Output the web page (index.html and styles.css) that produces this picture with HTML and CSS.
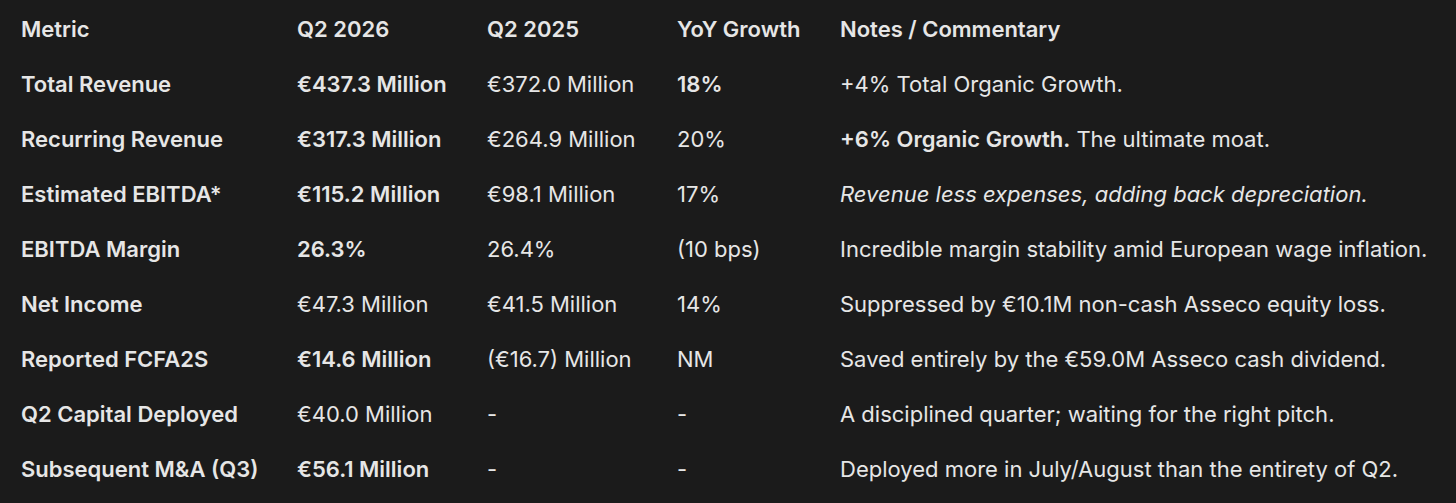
FILE: index.html
```html
<!DOCTYPE html>
<html lang="en">
<head>
<meta charset="utf-8">
<title>Q2 2026 Metrics</title>
<link rel="stylesheet" href="styles.css">
</head>
<body>
<table class="metrics">
  <colgroup>
    <col class="c1"><col class="c2"><col class="c3"><col class="c4"><col class="c5">
  </colgroup>
  <thead>
    <tr><th>Metric</th><th>Q2 2026</th><th>Q2 2025</th><th>YoY Growth</th><th>Notes / Commentary</th></tr>
  </thead>
  <tbody>
    <tr><td class="b">Total Revenue</td><td class="b">€437.3 Million</td><td>€372.0 Million</td><td class="b">18%</td><td>+4% Total Organic Growth.</td></tr>
    <tr><td class="b">Recurring Revenue</td><td class="b">€317.3 Million</td><td>€264.9 Million</td><td>20%</td><td><strong>+6% Organic Growth.</strong> The ultimate moat.</td></tr>
    <tr><td class="b">Estimated EBITDA*</td><td class="b">€115.2 Million</td><td>€98.1 Million</td><td>17%</td><td><em>Revenue less expenses, adding back depreciation.</em></td></tr>
    <tr><td class="b">EBITDA Margin</td><td class="b">26.3%</td><td>26.4%</td><td>(10 bps)</td><td>Incredible margin stability amid European wage inflation.</td></tr>
    <tr><td class="b">Net Income</td><td>€47.3 Million</td><td>€41.5 Million</td><td>14%</td><td>Suppressed by €10.1M non-cash Asseco equity loss.</td></tr>
    <tr><td class="b">Reported FCFA2S</td><td class="b">€14.6 Million</td><td>(€16.7) Million</td><td>NM</td><td>Saved entirely by the €59.0M Asseco cash dividend.</td></tr>
    <tr><td class="b">Q2 Capital Deployed</td><td>€40.0 Million</td><td>-</td><td>-</td><td>A disciplined quarter; waiting for the right pitch.</td></tr>
    <tr><td class="b">Subsequent M&amp;A (Q3)</td><td class="b">€56.1 Million</td><td>-</td><td>-</td><td>Deployed more in July/August than the entirety of Q2.</td></tr>
  </tbody>
</table>
</body>
</html>
```
FILE: styles.css
```css
html, body {
  margin: 0;
  padding: 0;
  background: #1b1b1b;
}
body {
  font-family: Inter, "Noto Sans", sans-serif;
  color: #e6e6e6;
  font-size: 22px;
  padding-top: 1px;
}
.metrics {
  border-collapse: collapse;
  table-layout: fixed;
  width: 1456px;
}
.c1 { width: 297px; }
.c2 { width: 190px; }
.c3 { width: 190px; }
.c4 { width: 163px; }
.metrics th, .metrics td {
  height: 55px;
  padding: 0;
  text-align: left;
  vertical-align: middle;
  white-space: nowrap;
  font-weight: 400;
}
.metrics th:first-child, .metrics td:first-child {
  padding-left: 21px;
}
.metrics th, .metrics td.b, .metrics strong {
  font-weight: 600;
}
.metrics em { font-style: italic; }
```
